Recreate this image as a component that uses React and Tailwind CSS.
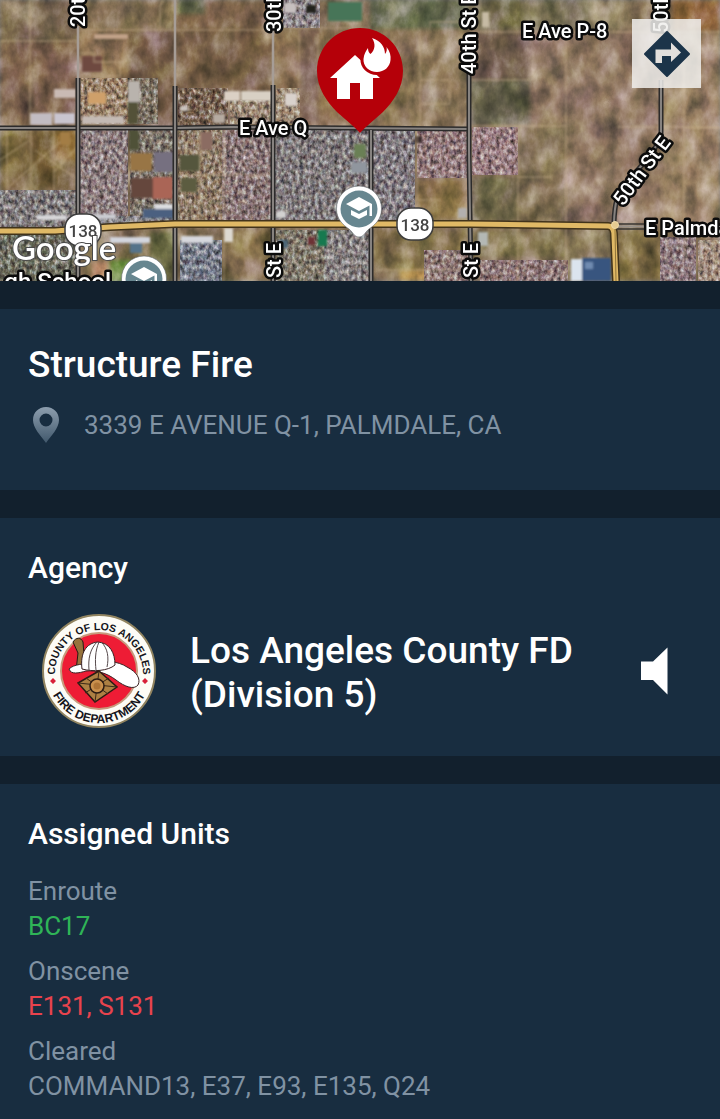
// src/pages/incidents/IncidentDetail.jsx
import React from "react";

const incident = {
  type: "Structure Fire",
  address: "3339 E AVENUE Q-1, PALMDALE, CA",
  agency: "Los Angeles County FD (Division 5)",
};

const unitGroups = [
  { status: "Enroute", units: ["BC17"], color: "text-[#2fb457]" },
  { status: "Onscene", units: ["E131", "S131"], color: "text-[#e8434d]" },
  {
    status: "Cleared",
    units: ["COMMAND13", "E37", "E93", "E135", "Q24"],
    color: "text-[#8092a3]",
  },
];

// open land: [x, y, w, h, fill]
const land = [
  [0, 0, 78, 42, "#77644f"],
  [0, 42, 78, 84, "#806450"],
  [80, 0, 95, 30, "#8a7659"],
  [80, 30, 50, 50, "#96795b"],
  [128, 30, 47, 96, "#745b48"],
  [177, 0, 96, 30, "#836a4f"],
  [177, 30, 96, 96, "#7a614a"],
  [177, 0, 28, 14, "#5f6349"],
  [275, 30, 95, 98, "#8f7557"],
  [299, 30, 20, 92, "#7d6355"],
  [370, 0, 98, 29, "#646a4d"],
  [370, 29, 98, 99, "#8d775b"],
  [470, 0, 120, 30, "#7c735b"],
  [490, 0, 32, 28, "#6d6645"],
  [590, 0, 40, 30, "#8f8062"],
  [672, 0, 48, 31, "#90673f"],
  [470, 33, 60, 47, "#735f50"],
  [470, 80, 60, 45, "#66624e"],
  [530, 33, 132, 190, "#917864"],
  [470, 177, 48, 44, "#746b4f"],
  [518, 127, 48, 94, "#857358"],
  [662, 33, 58, 190, "#9a8166"],
  [417, 180, 52, 40, "#8f764c"],
  [376, 230, 92, 40, "#806f49"],
  [470, 230, 96, 28, "#827451"],
  [568, 230, 44, 51, "#857459"],
  [618, 230, 44, 51, "#837048"],
  [0, 130, 78, 60, "#7c6842"],
  [33, 134, 21, 52, "#6e5934"],
  [55, 130, 22, 30, "#8d6a38"],
  [150, 232, 26, 49, "#707048"],
  [222, 230, 52, 51, "#8b7552"],
  [85, 244, 60, 37, "#806f4e"],
  [110, 260, 22, 21, "#5c8138"],
  [92, 262, 16, 19, "#b88a68"],
  [400, 270, 30, 11, "#b99358"],
];

// built-up blocks
const blocks = [
  [0, 190, 78, 38, "#7d7a78"],
  [0, 234, 78, 47, "#686b59"],
  [80, 130, 48, 88, "#8b7c7b"],
  [130, 130, 45, 88, "#7d7668"],
  [178, 130, 44, 90, "#8e7c64"],
  [222, 130, 51, 92, "#8a7774"],
  [275, 130, 94, 92, "#7e7a79"],
  [373, 130, 42, 90, "#807b7e"],
  [417, 130, 51, 48, "#947b7a"],
  [472, 127, 46, 48, "#9b7f80"],
  [180, 240, 42, 41, "#737b87"],
  [276, 230, 48, 51, "#7f7967"],
  [324, 230, 46, 51, "#85817e"],
  [424, 250, 44, 31, "#8f7a74"],
  [480, 260, 88, 21, "#8e7774"],
  [660, 237, 36, 44, "#8e7a7b"],
  [698, 240, 22, 41, "#a18d7b"],
  [283, 0, 37, 28, "#8c8688"],
  [80, 78, 50, 46, "#9a8264"],
  [178, 88, 50, 38, "#745f4a"],
  [128, 78, 30, 46, "#7b725f"],
  [78, 216, 96, 10, "#8b8b8c"],
  [230, 100, 42, 24, "#9a8870"],
  [276, 88, 24, 36, "#9d8a70"],
];

const buildings = [
  [30, 113, 22, 12, "#c2bcc2"],
  [54, 113, 21, 11, "#c9c5cf"],
  [54, 89, 22, 9, "#c9bab4"],
  [82, 116, 42, 8, "#c4bab4"],
  [128, 81, 12, 21, "#b9b3ad"],
  [128, 102, 10, 22, "#525138"],
  [88, 92, 18, 12, "#cfa06a"],
  [94, 34, 34, 5, "#c1a288"],
  [82, 56, 20, 16, "#6e4941"],
  [224, 91, 16, 10, "#dbd0c4"],
  [180, 106, 8, 5, "#c9c3be"],
  [241, 91, 32, 10, "#d8d0c4"],
  [285, 93, 12, 13, "#d9d2cc"],
  [213, 114, 12, 9, "#b6aba1"],
  [129, 130, 10, 20, "#505138"],
  [130, 153, 22, 18, "#987445"],
  [154, 152, 20, 20, "#766f80"],
  [131, 178, 22, 20, "#65473d"],
  [153, 177, 20, 22, "#aa6556"],
  [180, 155, 20, 16, "#54573c"],
  [200, 132, 12, 18, "#8b6c62"],
  [181, 178, 16, 14, "#5b5c3f"],
  [37, 215, 30, 5, "#d6d5d8"],
  [84, 214, 32, 5, "#cacbd0"],
  [143, 209, 31, 9, "#4c6080"],
  [155, 204, 18, 5, "#dcdde0"],
  [110, 237, 40, 6, "#d3d5dd"],
  [130, 243, 12, 10, "#54738a"],
  [181, 236, 32, 7, "#d6d7dc"],
  [224, 228, 9, 14, "#ddd9d0"],
  [60, 132, 10, 13, "#a37d45"],
  [354, 144, 12, 14, "#6b8054"],
  [351, 162, 16, 11, "#90969e"],
  [328, 2, 34, 19, "#477458"],
  [306, 5, 10, 8, "#20201f"],
  [284, 3, 12, 10, "#c7c0bf"],
  [318, 230, 9, 16, "#15794f"],
  [308, 237, 7, 8, "#6c3034"],
  [415, 136, 7, 7, "#342829"],
  [276, 211, 10, 7, "#d2d1d0"],
  [278, 240, 10, 8, "#4e6575"],
  [571, 259, 11, 22, "#dbe4ee"],
  [582, 258, 29, 23, "#38557f"],
  [585, 262, 8, 7, "#708bb0"],
  [478, 232, 10, 14, "#b4b8b4"],
  [482, 12, 7, 15, "#c6bba4"],
  [458, 208, 9, 10, "#b3b0af"],
];

const paths = [
  "M80 30H160V6L164 0",
  "M160 30H273",
  "M470 32H720",
  "M0 41H78",
  "M30 0V125",
  "M7 130V190M31 130V190M54 130V190",
  "M0 160L30 140M10 186L60 142M35 150L76 178M54 172L76 148",
  "M200 130V220M224 130V281",
  "M178 152H222M178 175H272",
  "M80 53H94V62H120V76H90",
  "M275 28H370M299 30V86",
  "M318 34V60",
  "M420 33V126M420 80H450V104H420",
  "M470 80H530M470 126H566",
  "M566 33V281",
  "M518 127V281M518 177H552",
  "M684 60V128H720M684 128V220",
  "M376 270H468M417 130V200H440",
  "M430 29V22H465",
  "M618 127H720",
  "M685 260V230M715 236V281",
];

const arterials = [
  "M0 128H175L232 127L468 129",
  "M78 78V281",
  "M175 86V281",
  "M273 85V281",
  "M371 130V281",
  "M469 72V150L471 281",
  "M661 80V138L650 156L622 188Q615 196 614 222",
];

const mapLabels = [
  { text: "E Ave Q", x: 239, y: 135 },
  { text: "E Ave P-8", x: 522, y: 38 },
  { text: "E Palmda", x: 645, y: 235 },
  { text: "20th", x: 85, y: 27, rotate: -90 },
  { text: "30th", x: 281, y: 32, rotate: -90 },
  { text: "40th St E", x: 476, y: 74, rotate: -90 },
  { text: "50th", x: 668, y: 33, rotate: -90 },
  { text: "St E", x: 281, y: 278, rotate: -90 },
  { text: "St E", x: 478, y: 278, rotate: -90 },
  { text: "50th St E", x: 623, y: 207, rotate: -53 },
];

const Rects = ({ items }) =>
  items.map(([x, y, w, h, fill], i) => (
    <rect key={i} x={x} y={y} width={w} height={h} fill={fill} />
  ));

const RouteShield = ({ x, y }) => (
  <g transform={`translate(${x} ${y})`}>
    <rect x="-18" y="-16" width="36" height="32" rx="14" fill="#fff" stroke="#3d3d3d" strokeWidth="1.5" />
    <text y="7" textAnchor="middle" fontSize="17" fontWeight="500" fill="#444">
      138
    </text>
  </g>
);

const SchoolMarker = ({ x, y }) => (
  <g transform={`translate(${x} ${y})`}>
    <path
      d="M0-23A22.500 22.500 0 0 1 22.500 0C22.500 10 16 16 10 20C6 23 5 28 0 28C-5 28-6 23-10 20C-16 16-22.500 10-22.500 0A22.500 22.500 0 0 1 0-23Z"
      fill="#fff"
      stroke="#5f6669"
      strokeWidth="0.6"
    />
    <circle r="18.500" fill="#67868f" />
    <path d="M0-12L-13-5L0 2L10.500-3.500V7H13V-5Z" fill="#fff" />
    <path d="M-8 1V6L0 10L8 6V1L0 5Z" fill="#fff" />
  </g>
);

const FirePin = () => (
  <g>
    <path
      d="M360 28C384 28 403 47 403 71C403 88 393 102 383 112C374 120 366 126 360 133C354 126 346 120 337 112C327 102 317 88 317 71C317 47 336 28 360 28Z"
      fill="#b50009"
    />
    <path d="M355 55L330 78H337V99H350V83H360V99H373V78H380Z" fill="#fff" />
    <path
      d="M372 38C381 41 385 47 385 54C387 52 387 49 386.500 47C390 51 391 56 390.500 60C390 67 384 72 377 72C369 72 363 66 363.500 59C364 54 366 51 368 48C368 51 369 53 370.500 54C375 50 376 44 372 38Z"
      fill="#fff"
      stroke="#b50009"
      strokeWidth="6"
      strokeLinejoin="round"
      paintOrder="stroke"
    />
  </g>
);

const IncidentMap = () => (
  <svg
    viewBox="0 0 720 281"
    preserveAspectRatio="xMidYMid slice"
    className="block h-[281px] w-full font-[Roboto,sans-serif]"
    role="img"
    aria-label="Incident map"
  >
    <defs>
      <filter id="ground" x="0" y="0" width="100%" height="100%" colorInterpolationFilters="sRGB">
        <feGaussianBlur in="SourceGraphic" stdDeviation="2" result="soft" />
        <feTurbulence type="fractalNoise" baseFrequency="0.05 0.035" numOctaves="5" seed="8" />
        <feColorMatrix values="0.6 0.05 0 0 0.19  0.55 0.1 0 0 0.185  0.55 0 0.1 0 0.175  0 0 0 0 1" />
        <feBlend in2="soft" mode="hard-light" />
      </filter>
      <filter id="urban" x="0" y="0" width="100%" height="100%" colorInterpolationFilters="sRGB">
        <feTurbulence type="fractalNoise" baseFrequency="0.26 0.2" numOctaves="3" seed="3" />
        <feColorMatrix values="0.85 0.15 0 0 0.01  0.9 0 0 0 0.05  0.85 0 0.15 0 0.01  0 0 0 0 1" result="n" />
        <feBlend in="n" in2="SourceGraphic" mode="hard-light" />
        <feGaussianBlur stdDeviation="0.5" />
        <feComposite in2="SourceGraphic" operator="in" />
      </filter>
      <filter id="soft" x="0" y="0" width="100%" height="100%">
        <feGaussianBlur stdDeviation="0.9" />
      </filter>
    </defs>

    <g filter="url(#ground)">
      <rect width="720" height="281" fill="#86715a" />
      <Rects items={land} />
    </g>
    <g filter="url(#urban)">
      <Rects items={blocks} />
    </g>
    <g filter="url(#soft)">
      <Rects items={buildings} />
      {paths.map((d) => (
        <path key={d} d={d} fill="none" stroke="#c9b48d" strokeWidth="1.5" opacity="0.5" />
      ))}
    </g>

    {/* minor stretches of the numbered streets */}
    <path d="M78 26V80M175 0V88M273 30V88" fill="none" stroke="#a69d96" strokeWidth="2.500" />
    {arterials.map((d) => (
      <g key={d} fill="none">
        <path d={d} stroke="#2c2b2b" strokeWidth="5" />
        <path d={d} stroke="#86827f" strokeWidth="2" />
      </g>
    ))}
    <path d="M617 224H648M617 229H648" stroke="#393633" strokeWidth="1.5" />
    <path d="M617 226.500H648" stroke="#97908a" strokeWidth="2" />

    {/* highway 138 */}
    <g fill="none" strokeLinejoin="round">
      <path d="M0 231H55L110 227L175 224H470L608 226Q614 226 614 236L616 281" stroke="#41331b" strokeWidth="8" />
      <path d="M0 231H55L110 227L175 224H470L608 226Q614 226 614 236L616 281" stroke="#e0b966" strokeWidth="5" />
      <path d="M615 229L616 281" stroke="#7b622e" strokeWidth="0.8" />
      <circle cx="615" cy="225" r="3.500" fill="#e6cb91" stroke="#f0dba9" />
    </g>

    <RouteShield x={83} y={230} />
    <RouteShield x={415} y={224} />

    <g fontSize="20" fontWeight="500" fill="#fff" stroke="#0b0b0b" strokeWidth="5" strokeLinejoin="round" paintOrder="stroke">
      {mapLabels.map(({ text, x, y, rotate = 0 }) => (
        <text key={`${text}-${x}`} transform={`translate(${x} ${y}) rotate(${rotate})`}>
          {text}
        </text>
      ))}
      <text x="111" y="290" textAnchor="end" fontSize="24">
        gh School
      </text>
    </g>

    <SchoolMarker x={144} y={279} />
    <SchoolMarker x={359} y={209} />
    <text
      x="12"
      y="260"
      fontSize="33"
      fontWeight="600"
      fill="#fff"
      stroke="#4a4a4a"
      strokeWidth="2"
      paintOrder="stroke"
      className="font-[Lato,sans-serif]"
    >
      Google
    </text>
    <FirePin />
  </svg>
);

const DirectionsIcon = () => (
  <svg viewBox="0 0 48 48" className="size-12" aria-hidden="true">
    <path d="M24 2L46 24L24 46L2 24Z" fill="#1c3449" stroke="#1c3449" strokeWidth="2" strokeLinejoin="round" />
    <path d="M12.500 33V19.500H28V12.500L38 22.500L28 32V26H19V33Z" fill="#e2dfdc" />
  </svg>
);

const LocationIcon = () => (
  <svg viewBox="0 0 28 36" className="h-9 w-7 shrink-0" aria-hidden="true">
    <defs>
      <linearGradient id="pinShade" x1="0" y1="0" x2="0" y2="1">
        <stop offset="0" stopColor="#8d9eae" />
        <stop offset="1" stopColor="#41586c" />
      </linearGradient>
    </defs>
    <path
      fillRule="evenodd"
      d="M14 0C21.500 0 27 5.500 27 13C27 21 19 29 14 36C9 29 1 21 1 13C1 5.500 6.500 0 14 0ZM14 6.500A6.500 6.500 0 1 0 14 19.500A6.500 6.500 0 1 0 14 6.500Z"
      fill="url(#pinShade)"
    />
  </svg>
);

const AgencySeal = () => (
  <svg viewBox="0 0 114 114" className="size-[114px] shrink-0" role="img" aria-label="County of Los Angeles Fire Department">
    <defs>
      <path id="sealTop" d="M13 60A44 44 0 1 1 101 60" />
      <path id="sealBottom" d="M5 57A52 52 0 0 0 109 57" />
    </defs>
    <circle cx="57" cy="57" r="56" fill="#fdfcf6" stroke="#918460" strokeWidth="2" />
    <circle cx="57" cy="57" r="38" fill="#ee1c35" stroke="#c79a7c" strokeWidth="2" />
    <g fontWeight="700" fill="#15151b" textAnchor="middle" className="font-['Liberation_Sans',sans-serif]">
      <text fontSize="10.5">
        <textPath href="#sealTop" startOffset="50%">
          COUNTY OF LOS ANGELES
        </textPath>
      </text>
      <text fontSize="12">
        <textPath href="#sealBottom" startOffset="50%">
          FIRE DEPARTMENT
        </textPath>
      </text>
    </g>
    <path d="M11 64L14 67L11 70L8 67ZM103 64L106 67L103 70L100 67Z" fill="#d8213b" />

    {/* helmet */}
    <path d="M31 28C34 23 39 23 41 28L43 55L34 57L36 39Z" fill="#96733c" stroke="#231a12" strokeWidth="1" />
    <path
      d="M27 55C32 50 42 50 50 49C62 46 76 47 85 53C95 58 99 65 96 71C92 76 83 73 74 66C65 59 54 56 44 57C37 59 29 61 27 55Z"
      fill="#fff"
      stroke="#3a2224"
      strokeWidth="1"
    />
    <path d="M40 55C38 39 44 29 56 28C68 29 73 39 73 51C66 57 51 58 40 55Z" fill="#fff" stroke="#3a2224" strokeWidth="1" />
    <path d="M55 28C48 35 46 45 47 56M57 28C53 37 53 47 54 56M59 28C66 34 67 44 65 53" fill="none" stroke="#55494b" strokeWidth="1" />
    <path d="M57 57L75 73L53 88L36 69Z" fill="#ad8043" stroke="#2b1b12" strokeWidth="1.5" />
    <path d="M57 57L53 88M75 73L36 69M44 64L66 80M67 64L43 79" stroke="#3c2817" strokeWidth="1" />
    <circle cx="55" cy="72" r="7" fill="#c9904d" stroke="#2b1b12" strokeWidth="1.500" />
    <circle cx="55" cy="72" r="3.500" fill="#ae7436" />
  </svg>
);

const SpeakerIcon = () => (
  <svg viewBox="0 0 28 48" className="h-12 w-7" fill="#fff" aria-hidden="true">
    <path d="M1 14.500H13L27.500 0.500V47.500L13 33H1Z" />
  </svg>
);

const Section = ({ className = "", children }) => (
  <section className={`bg-[#182d40] px-7 pt-8 ${className}`}>{children}</section>
);

const IncidentDetail = () => {
  return (
    <main className="flex min-h-screen flex-col gap-7 bg-[#12202d] font-[Roboto,sans-serif] text-white">
      <div className="relative">
        <IncidentMap />
        <button
          type="button"
          aria-label="Directions"
          className="absolute top-[19px] right-[19px] flex size-[69px] items-center justify-center bg-[#f0eeec]/85"
        >
          <DirectionsIcon />
        </button>
      </div>

      <Section className="pb-[47px]">
        <h1 className="text-[37px] leading-[48px] font-medium">{incident.type}</h1>
        <div className="mt-[18px] flex items-center gap-6 pl-1 text-[#8092a3]">
          <LocationIcon />
          <p className="text-[26px] leading-9">{incident.address}</p>
        </div>
      </Section>

      <Section className="pb-7">
        <h2 className="text-[30px] leading-9 font-medium">Agency</h2>
        <div className="mt-7 flex items-center gap-[34px] pr-6 pl-3.5">
          <AgencySeal />
          <p className="flex-1 pt-1 text-[37px] leading-[44px] font-medium">{incident.agency}</p>
          <button type="button" aria-label="Play agency audio">
            <SpeakerIcon />
          </button>
        </div>
      </Section>

      <Section className="flex-1 pb-3">
        <h2 className="text-[30px] leading-9 font-medium">Assigned Units</h2>
        <dl className="mt-[22px] flex flex-col gap-2.5 text-[26px] leading-[35px]">
          {unitGroups.map(({ status, units, color }) => (
            <div key={status}>
              <dt className="text-[#8092a3]">{status}</dt>
              <dd className={color}>{units.join(", ")}</dd>
            </div>
          ))}
        </dl>
      </Section>
    </main>
  );
};

export default IncidentDetail;
